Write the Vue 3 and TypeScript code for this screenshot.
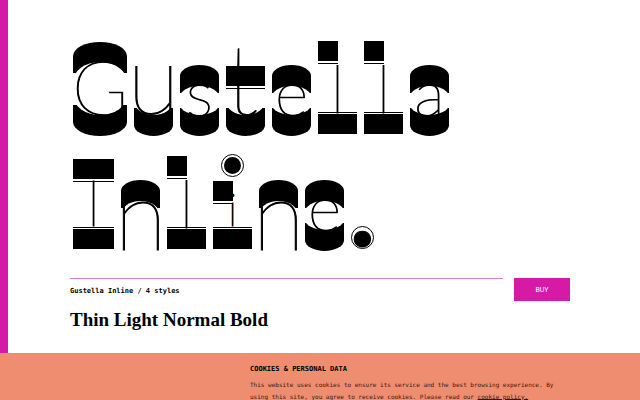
<script setup lang="ts">
interface Glyph {
  char: string
  shape: string
}

const shapes: Record<string, string> = {
  G: 'round', I: 'slab', u: 'cup', n: 'arch', s: 'bowl', e: 'bowl', a: 'bowl',
  t: 'cross', l: 'stem', i: 'dotted', '.': 'stop',
}

const toGlyphs = (word: string): Glyph[] =>
  [...word].map((char) => ({ char, shape: shapes[char] }))

const title: Glyph[][] = ['Gustella', 'Inline.'].map(toGlyphs)
const styles: string[] = ['Thin', 'Light', 'Normal', 'Bold']
</script>

<template>
  <div class="page">
    <main class="content">
      <h1 class="title">
        <span v-for="(line, i) in title" :key="i" class="line">
          <span v-for="(glyph, j) in line" :key="j" class="glyph" :class="glyph.shape">
            <i v-if="glyph.shape === 'dotted'" class="disc"></i>
            <span class="inline">{{ glyph.char }}</span>
          </span>
        </span>
      </h1>
      <section class="family">
        <div class="details">
          <h2 class="name">Gustella Inline / 4 styles</h2>
          <p class="styles">{{ styles.join(' ') }}</p>
        </div>
        <button class="buy" type="button">BUY</button>
      </section>
    </main>
    <aside class="cookies">
      <div class="notice">
        <h2 class="heading">COOKIES &amp; PERSONAL DATA</h2>
        <p class="message">This website uses cookies to ensure its service and the best browsing experience. By using this site, you agree to receive cookies. Please read our <a href="#cookies">cookie policy.</a></p>
      </div>
    </aside>
  </div>
</template>

<style>
body {
  margin: 0;
  background: #fff;
}
</style>

<style scoped>
.page {
  display: flex;
  flex-direction: column;
  height: 100vh;
  overflow: hidden;
  color: #000;
  font-family: "DejaVu Sans Mono", "Liberation Mono", monospace;
}
.content {
  flex: 1;
  min-height: 0;
  padding: 30px 70px 0 62px;
  border-left: 8px solid #d61aa6;
}
.title {
  margin: 0;
  padding-left: 3px;
  font-family: Lato, sans-serif;
  font-weight: 100;
}
.line {
  display: flex;
  align-items: flex-start;
  gap: 7px;
  height: 115px;
}

/* Each letter is a hairline character set between two heavy blocks. */
.glyph {
  display: flex;
  flex-direction: column;
  flex: none;
  width: 39px;
  padding-top: 35px;
}
.glyph::before,
.glyph::after {
  content: "";
  flex: none;
  height: 28px;
  background: #000;
}
.glyph::before { border-radius: 20px 20px 0 0 / 11px 11px 0 0; }
.glyph::after { border-radius: 0 0 20px 20px / 0 0 11px 11px; }
.inline {
  position: relative;
  display: flex;
  justify-content: center;
  flex: none;
  box-sizing: border-box;
  height: 29px;
  background: #fff;
  -webkit-text-stroke: 1px #000;
}

.round { width: 54px; padding-top: 12px; }
.round::before,
.round::after { height: 31px; }
.round::before { border-radius: 27px 27px 0 0 / 14px 14px 0 0; }
.round::after { border-radius: 0 0 27px 27px / 0 0 14px 14px; }
.round .inline {
  height: 53px;
  margin: -11px 0 -10px;
  border-radius: 27px / 20px;
  font-size: 76px;
  line-height: 48px;
}

.bowl .inline {
  margin: -7px 0;
  border-radius: 20px / 11px;
  font-size: 64px;
  line-height: 11px;
}

.cup::before { display: none; }
.cup .inline {
  height: 50px;
  margin-bottom: -7px;
  border-radius: 0 0 20px 20px / 0 0 14px 14px;
  font-size: 96px;
  line-height: 24px;
}

.arch::after { display: none; }
.arch .inline {
  height: 49px;
  margin-top: -7px;
  border-radius: 20px 20px 0 0 / 14px 14px 0 0;
  font-size: 96px;
  line-height: 24px;
}

.cross { padding-top: 20px; }
.cross::before { display: none; }
.cross .inline {
  height: 65px;
  margin-bottom: -7px;
  justify-content: flex-start;
  border-radius: 0 0 20px 20px / 0 0 14px 14px;
  background: linear-gradient(#fff 16px, #000 16px, #000 36px, #fff 36px, #fff 38px, #000 38px, #000 39px, #fff 39px);
  font-size: 98px;
  line-height: 54px;
}

.stem { padding-top: 11px; }
.stem::before,
.dotted::before,
.stem::after,
.dotted::after,
.slab::before,
.slab::after {
  height: 20px;
  border-radius: 0;
}
.stem::before,
.dotted::before { width: 20px; }
.stem .inline,
.dotted .inline,
.slab .inline {
  margin: 2px 0 1px;
  border-bottom: 1px solid #000;
  background: linear-gradient(#000, #000) 0 0 / 20px 1px no-repeat;
}
.stem .inline {
  height: 50px;
  font-size: 67px;
  line-height: 48px;
}

.dotted { padding-top: 9px; }
.dotted .inline {
  height: 25px;
  font-size: 46px;
  line-height: 12px;
}
.disc {
  order: -1;
  box-sizing: border-box;
  width: 23px;
  height: 23px;
  margin: 0 0 4px 8px;
  padding: 2px;
  border: 1px solid #000;
  border-radius: 50%;
  background: #000 content-box;
}

.slab { width: 41px; padding-top: 14px; }
.slab .inline {
  height: 47px;
  background-size: 100% 1px;
  font-size: 64px;
  line-height: 42px;
}

.stop { width: 23px; padding-top: 81px; }
.stop::after { display: none; }
.stop::before {
  box-sizing: border-box;
  height: 23px;
  border: 1px solid #000;
  border-radius: 50%;
  background: none;
}
.stop .inline {
  height: 23px;
  margin-top: -42px;
  background: none;
  font-size: 100px;
  font-weight: 900;
  line-height: 0;
}

.family {
  display: flex;
  align-items: flex-start;
  gap: 11px;
  margin-top: 18px;
}
.details {
  flex: 1;
  border-top: 1px solid #dc7fc8;
}
.name {
  margin: 8px 0 0;
  font-size: 7px;
  line-height: 9px;
}
.styles {
  margin: 10px 0 0;
  font: bold 19px/28px "Liberation Serif", serif;
}
.buy {
  width: 56px;
  height: 23px;
  padding: 0;
  border: 0;
  background: #d61aa6;
  color: #fff;
  font: 7px/25px Roboto, sans-serif;
}
.cookies {
  flex: none;
  height: 47px;
  background: #ef8d70;
}
.notice {
  padding: 11px 70px 0 250px;
}
.heading {
  margin: 0;
  font-size: 7px;
  line-height: 10px;
}
.message {
  margin: 5px 0 0;
  font-size: 6px;
  line-height: 12px;
  color: #3a1a10;
}
.message a {
  color: inherit;
  text-decoration: underline 1px;
  text-underline-offset: 0;
}
</style>
